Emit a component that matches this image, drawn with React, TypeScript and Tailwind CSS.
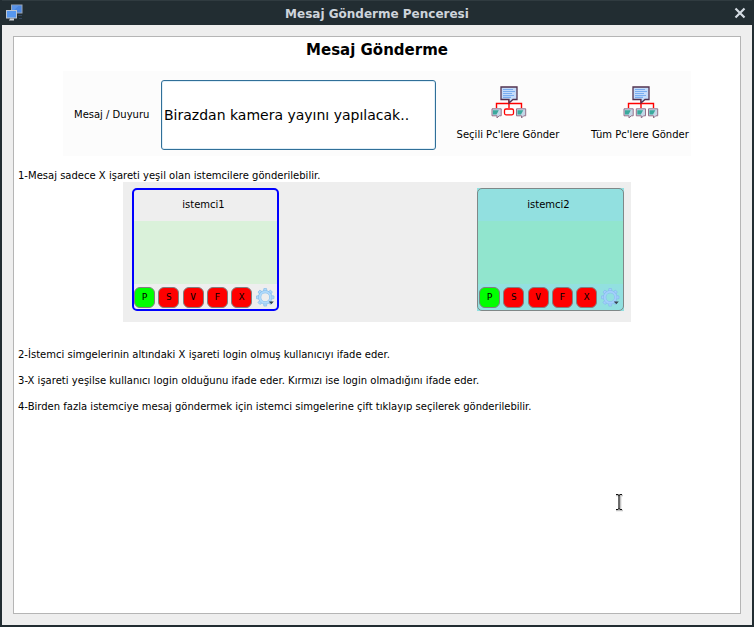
import React from "react";

function MonitorsIcon() {
  return (
    <svg width="18" height="18" viewBox="0 0 18 18">
      <rect x="5.5" y="1" width="10.5" height="8" fill="#4a86e0" stroke="#9aa5b5" />
      <path d="M6 1.5h7L6 8z" fill="#5b94e8" />
      <path d="M12 11h4v1h-4zM13 14h3v1h-3z" fill="#34465c" />
      <rect x="0.5" y="6.5" width="10" height="7.5" fill="#5596ee" stroke="#bcc6d2" />
      <path d="M4 14.5h4v1H4zM3 15.5h5v1H3z" fill="#c9ced4" />
    </svg>
  );
}

function SmallBubble({ x }: { x: number }) {
  return (
    <g transform={`translate(${x} 23)`}>
      <path d="M0.5 0.8h9.200v7h-2l-2.200 2.200v-2.200h-5z" fill="#c5d8e8" stroke="#94728a" />
      <path d="M1.500 2.200h5.800L5 6.500H1.500z" fill="#3ba99d" />
    </g>
  );
}

function NetworkIcon({ kind }: { kind: "selected" | "all" }) {
  const selected = kind === "selected";
  return (
    <svg width="36" height="34" viewBox="0 0 36 34" className="relative left-[0.5px]">
      <path d="M18 15v8M5.500 23v-4.500h25V23" fill="none" stroke="#f00" strokeWidth="1.400" />
      <path
        d="M10 2h16v12.500h-4L18 18v-3.500h-8z"
        fill="#c5dcfa"
        stroke="#51324f"
        strokeWidth="1.300"
      />
      <path d="M12 4.500h10M12 6.500h12M12 8.500h9M12 10.500h11M12 12.300h8" stroke="#79adf0" strokeWidth="1.200" />
      <SmallBubble x={0.5} />
      {selected ? (
        <rect x="13.500" y="24" width="9" height="5.800" rx="1.500" fill="#fff" stroke="#f00" strokeWidth="1.300" />
      ) : (
        <SmallBubble x={12.8} />
      )}
      <SmallBubble x={25} />
    </svg>
  );
}

function GearIcon({ tinted }: { tinted: boolean }) {
  const fill = tinted ? "#a3d0fb" : "#b0dafb";
  const edge = tinted ? "#86b9ec" : "#86bce8";
  return (
    <svg width="20" height="20" viewBox="0 0 20 20" className="mt-px ml-px shrink-0">
      <g fill={fill} stroke={edge} strokeWidth="0.7">
        {[0, 45, 90, 135, 180, 225, 270, 315].map((a) => (
          <path key={a} d="M7.300 4L7.900 .5h2.600l.6 3.500z" transform={`rotate(${a} 9.200 9.300)`} />
        ))}
      </g>
      <circle cx="9.200" cy="9.300" r="5.500" fill="none" stroke={edge} strokeWidth="3" />
      <circle cx="9.200" cy="9.300" r="5.500" fill="none" stroke={fill} strokeWidth="2" />
      <path d="M12.800 13.500h5l-2.500 2.700z" fill="#37444e" />
    </svg>
  );
}

const statuses = ["P", "S", "V", "F", "X"];

function ClientCard({ name, selected }: { name: string; selected: boolean }) {
  return (
    <div className={selected ? "h-[123px] w-[147px] bg-[#eeeeee]" : "h-[123px] w-[147px] bg-[#92e0e0]"}>
      <div
        className={
          selected
            ? "flex h-full flex-col rounded-[5px] border-2 border-[#0000ff]"
            : "flex h-full flex-col rounded-[5px] border border-[#7f8888] pt-px"
        }
      >
        <div className="flex h-[31px] items-center justify-center pr-[4px] pb-[2px] text-[10px]">{name}</div>
        <div className={selected ? "h-[63px] bg-[#daf1da]" : "h-[63px] bg-[#91e5ce]"} />
        <div className={selected ? "flex pt-[3px]" : "flex pt-[3px] pl-px"}>
          <div className="flex w-[121px] shrink-0 justify-between pr-[3px]">
            {statuses.map((s) => (
              <span
                key={s}
                className={
                  s === "P"
                    ? "flex h-[21px] w-[21px] items-center justify-center rounded-[6px] border border-[#808080] bg-[#00ff00] font-['DejaVu_Sans_Mono',monospace] text-[9.5px]"
                    : "flex h-[21px] w-[21px] items-center justify-center rounded-[6px] border border-[#808080] bg-[#ff0000] font-['DejaVu_Sans_Mono',monospace] text-[9.5px]"
                }
              >
                {s}
              </span>
            ))}
          </div>
          <GearIcon tinted={!selected} />
        </div>
      </div>
    </div>
  );
}

export default function App() {
  return (
    <div className="relative flex h-[627px] w-[754px] flex-col border-x-2 border-b-2 border-[#222d32] bg-[#eeeeee] font-['DejaVu_Sans',sans-serif] text-[10px] text-black">
      <header className="flex h-[25px] shrink-0 items-center justify-between border-t border-[#303b40] bg-[#222d32] pr-[6px] pl-[4px]">
        <MonitorsIcon />
        <h1 className="-ml-[4px] pt-[2px] text-[12px] leading-4 font-bold whitespace-nowrap text-[#ced4db]">
          Mesaj Gönderme Penceresi
        </h1>
        <svg width="12" height="12" viewBox="0 0 12 12">
          <path d="M1.500 1.500l9 9M10.500 1.500l-9 9" stroke="#d4dbe2" strokeWidth="2.200" />
        </svg>
      </header>

      <main className="mx-[11px] mt-[11px] h-[578px] w-[728px] border border-[#b5b5b5] bg-white">
        <h2 className="h-[34px] pt-[3px] text-center text-[15px] leading-5 font-bold">Mesaj Gönderme</h2>

        <section className="ml-[49px] flex h-[85px] w-[628px] bg-[#fcfcfc] pt-[9px]">
          <label className="w-[98px] shrink-0 pt-[29px] pl-[11px] leading-3 whitespace-nowrap">Mesaj / Duyuru</label>
          <div className="flex h-[70px] w-[275px] shrink-0 items-center rounded-[3px] border border-[#306f98] bg-white pl-[2px] text-[14px] whitespace-nowrap shadow-[inset_0_0_0_1px_#e0eff8]">
            Birazdan kamera yayını yapılacak..
          </div>
          <button className="ml-[17px] flex w-[110px] shrink-0 flex-col items-center pt-[5px] whitespace-nowrap">
            <NetworkIcon kind="selected" />
            <span className="mt-[10px] leading-3">Seçili Pc'lere Gönder</span>
          </button>
          <button className="ml-[26px] flex w-[102px] shrink-0 flex-col items-center pt-[5px] whitespace-nowrap">
            <NetworkIcon kind="all" />
            <span className="mt-[10px] leading-3 tracking-[0.03px]">Tüm Pc'lere Gönder</span>
          </button>
        </section>

        <p className="h-[26px] pt-[14px] pl-[4px] leading-3 tracking-[0.01px]">
          1-Mesaj sadece X işareti yeşil olan istemcilere gönderilebilir.
        </p>

        <section className="ml-[109px] flex h-[140px] w-[508px] justify-between bg-[#eeeeee] pt-[6px] pr-[7px] pl-[9px]">
          <ClientCard name="istemci1" selected />
          <ClientCard name="istemci2" selected={false} />
        </section>

        <div className="flex flex-col gap-[14px] pt-[27px] pl-[4px] leading-3 tracking-[0.01px]">
          <p>2-İstemci simgelerinin altındaki X işareti login olmuş kullanıcıyı ifade eder.</p>
          <p className="tracking-[0.02px]">
            3-X işareti yeşilse kullanıcı login olduğunu ifade eder. Kırmızı ise login olmadığını ifade eder.
          </p>
          <p>4-Birden fazla istemciye mesaj göndermek için istemci simgelerine çift tıklayıp seçilerek gönderilebilir.</p>
        </div>
      </main>

      <svg className="absolute top-[493px] left-[613px]" width="9" height="20" viewBox="0 0 9 20" fill="none">
        <path d="M1 2.500h7M5.500 3v13M1 17.500h7" stroke="#c4c4c4" strokeWidth="1.600" />
        <path d="M1 1.500h2M5 1.500h2M4 2v14M1 16.500h2M5 16.500h2" stroke="#111" strokeWidth="1.200" />
        <path d="M3 2h2M3 16h2" stroke="#111" />
      </svg>
    </div>
  );
}
